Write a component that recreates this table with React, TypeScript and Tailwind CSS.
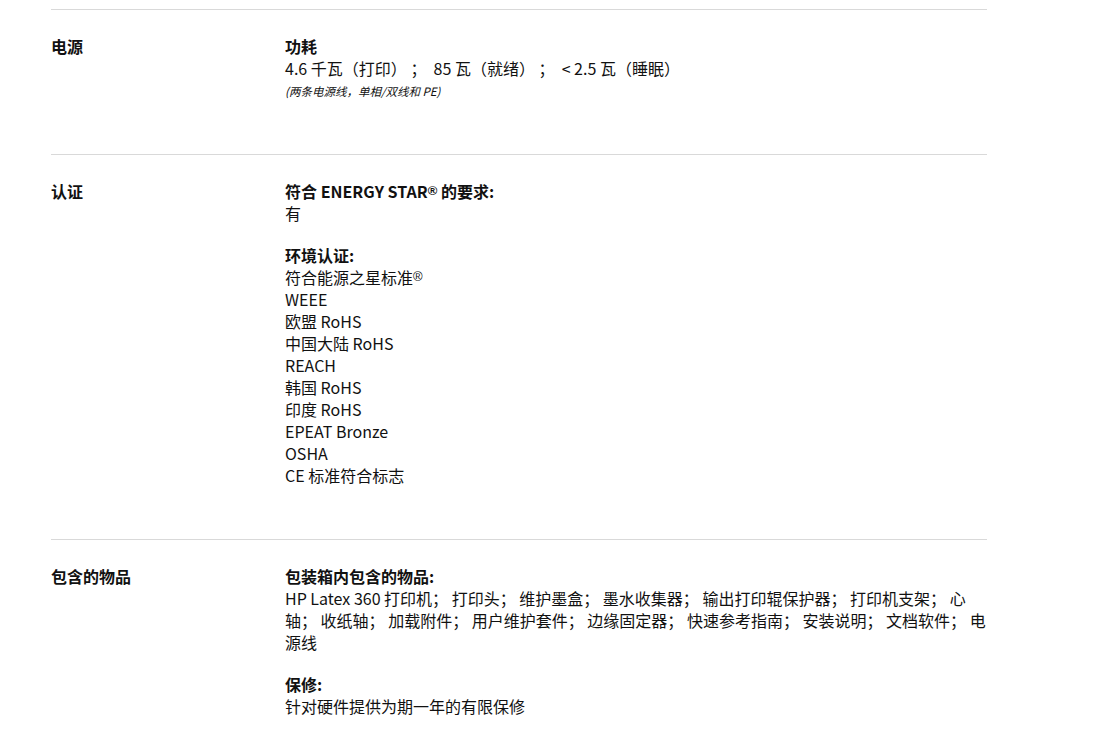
import React from "react";

const font = { fontFamily: '"Noto Sans CJK SC", "Noto Sans", sans-serif' };

function Section({ label, children }: { label: string; children: React.ReactNode }) {
  return (
    <div className="flex border-t border-[#d9d9d9] pt-[25px] pb-[53px]">
      <div className="w-[234px] shrink-0 font-bold text-[16px] leading-[22px]">{label}</div>
      <div className="w-[702px] text-[16px] leading-[22px]">{children}</div>
    </div>
  );
}

function Title({ children }: { children: React.ReactNode }) {
  return <div className="font-bold">{children}</div>;
}

function Reg() {
  return (
    <span className="relative top-[-3px] text-[13px] leading-none" style={{ fontFamily: '"Liberation Sans", sans-serif' }}>
      ®
    </span>
  );
}

export default function App() {
  return (
    <div className="min-h-[742px] w-[1100px] bg-white text-[#111]" style={font}>
      <div className="ml-[51px] w-[936px] pt-[9px]">
        <Section label="电源">
          <Title>功耗</Title>
          <div className="whitespace-pre">4.6 千瓦（打印） ；  85 瓦（就绪） ；  &lt; 2.5 瓦（睡眠）</div>
          <div className="mt-[2px] text-[11.5px] leading-[20px] italic">(两条电源线，单相/双线和 PE)</div>
        </Section>
        <Section label="认证">
          <Title>
            符合 ENERGY STAR<Reg /> 的要求:
          </Title>
          <div>有</div>
          <div className="mt-5">
            <Title>环境认证:</Title>
            <div>
              符合能源之星标准<Reg />
            </div>
            <div>WEEE</div>
            <div>欧盟 RoHS</div>
            <div>中国大陆 RoHS</div>
            <div>REACH</div>
            <div>韩国 RoHS</div>
            <div>印度 RoHS</div>
            <div>EPEAT Bronze</div>
            <div>OSHA</div>
            <div>CE 标准符合标志</div>
          </div>
        </Section>
        <Section label="包含的物品">
          <Title>包装箱内包含的物品:</Title>
          <div className="whitespace-nowrap">
            HP Latex 360 打印机； 打印头； 维护墨盒； 墨水收集器； 输出打印辊保护器； 打印机支架； 心
            <br />
            轴； 收纸轴； 加载附件； 用户维护套件； 边缘固定器； 快速参考指南； 安装说明； 文档软件； 电
            <br />
            源线
          </div>
          <div className="mt-5">
            <Title>保修:</Title>
            <div>针对硬件提供为期一年的有限保修</div>
          </div>
        </Section>
      </div>
    </div>
  );
}
